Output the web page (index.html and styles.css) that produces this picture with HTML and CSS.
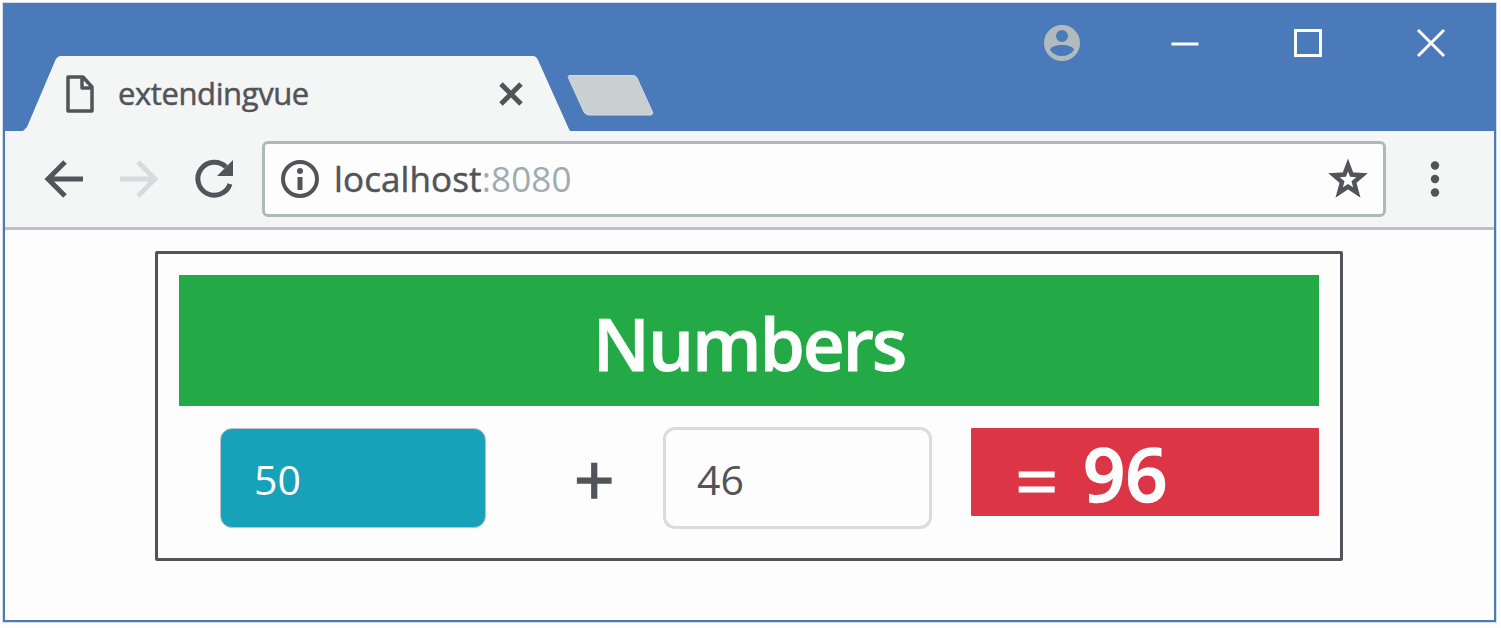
FILE: index.html
```html
<!DOCTYPE html>
<html lang="en">
<head>
<meta charset="utf-8">
<title>extendingvue</title>
<link rel="stylesheet" href="styles.css">
</head>
<body>
<div class="window">
  <header class="titlebar">
    <div class="tab">
      <svg class="tab-shape" width="547" height="75" viewBox="0 0 547 75"><path d="M0 75 L4 71 L32 5 Q34 0 38 0 H510 Q513 0 515 4 L545 71 L547 75 Z"/></svg>
      <svg class="page-icon" width="28" height="38" viewBox="0 0 28 38"><path d="M2 2H17L26 12V36H2Z M16 2V13H26"/></svg>
      <span class="tab-title">extendingvue</span>
      <svg class="tab-close" width="24" height="24" viewBox="0 0 24 24"><path d="M2 2L22 22M22 2L2 22"/></svg>
    </div>
    <svg class="new-tab" width="85" height="41" viewBox="0 0 85 41"><path d="M2 .5H65Q68 .5 69 3L84 36Q86 40 82 40H21Q18 40 16 37L1 4Q-1 .5 2 .5Z"/></svg>
    <div class="controls">
      <svg width="36" height="36" viewBox="0 0 36 36"><path class="user" fill-rule="evenodd" d="M18 0A18 18 0 1 0 18 36A18 18 0 1 0 18 0ZM18 5A6 6 0 1 1 18 17A6 6 0 1 1 18 5ZM18 20C24 20 30 22 30 25C27 29 23 31 18 31S9 29 6 25C6 22 12 20 18 20Z"/></svg>
      <svg width="28" height="28" viewBox="0 0 28 28"><path d="M.5 15H27.5"/></svg>
      <svg width="28" height="28" viewBox="0 0 28 28"><path d="M1.5 1.5H26.5V26.5H1.5Z"/></svg>
      <svg width="28" height="28" viewBox="0 0 28 28"><path d="M1 1L27 27M27 1L1 27"/></svg>
    </div>
  </header>
  <nav class="toolbar">
    <svg class="nav-icon" width="38" height="38" viewBox="0 0 38 38"><path d="M38 19H3M20 2L3 19L20 36"/></svg>
    <svg class="nav-icon disabled" width="38" height="38" viewBox="0 0 38 38"><path d="M0 19H35M18 2L35 19L18 36"/></svg>
    <svg class="nav-icon" width="40" height="38" viewBox="0 0 40 38"><path d="M31 7A16.5 16.5 0 1 0 35 24"/><path class="solid" d="M38 0V16H22Z"/></svg>
    <div class="address">
      <svg class="info" width="38" height="38" viewBox="0 0 38 38"><circle cx="19" cy="19" r="17"/><path d="M19 17V30"/><circle class="dot" cx="19" cy="11" r="3"/></svg>
      <span class="url"><span class="host">localhost</span><span class="port">:8080</span></span>
      <svg class="star" width="38" height="38" viewBox="0 0 38 38"><path d="M19 5L22.6 14.6L33 15.2L25 22L27.8 32.5L19 26.7L10.2 32.5L13 22L5 15.2L15.4 14.6Z"/></svg>
    </div>
    <svg class="menu" width="10" height="38" viewBox="0 0 10 38"><circle cx="5" cy="5.5" r="4.2"/><circle cx="5" cy="19" r="4.2"/><circle cx="5" cy="32.5" r="4.2"/></svg>
  </nav>
  <main class="content">
    <section class="panel">
      <h1 class="heading">Numbers</h1>
      <div class="row">
        <div class="field filled">50</div>
        <div class="plus">+</div>
        <div class="field outlined">46</div>
        <div class="result"><span class="equals">=</span><span class="sum">96</span></div>
      </div>
    </section>
  </main>
</div>
</body>
</html>
```
FILE: styles.css
```css
* { box-sizing: border-box; }
body { margin: 0; padding: 3px; height: 628px; overflow: hidden; background: #fdfdfd; font-family: "Open Sans", "Noto Sans", sans-serif; color: #515459; }
svg { display: block; flex: none; fill: none; overflow: visible; }
.window { width: 1493px; height: 619px; border: 2px solid #4b7abb; border-top: 0; box-shadow: 0 0 0 1px #d5dde0; background: #fdfdfd; }
.titlebar { display: flex; height: 128px; background: #4b7abb; }
.tab { position: relative; display: flex; flex: none; align-items: center; width: 547px; height: 75px; margin: 53px 0 0 18px; padding-left: 43px; }
.tab-shape { position: absolute; left: 0; top: 0; fill: #f4f6f6; }
.page-icon { position: relative; stroke: #515459; stroke-width: 3.5; stroke-linejoin: round; }
.tab-title { position: relative; width: 191px; margin: -2px 0 0 24px; font-size: 31px; letter-spacing: -0.4px; line-height: 40px; white-space: nowrap; -webkit-text-stroke: .5px #515459; }
.tab-close { position: relative; margin-left: 190px; stroke: #515459; stroke-width: 5; }
.new-tab { margin: 72px 0 0 -2px; fill: #c8d0d2; stroke: #d5dde0; }
.controls { display: flex; align-items: flex-start; margin: 22px 0 0 391px; stroke: #fdfdfd; stroke-width: 3; }
.controls svg { margin-right: 95px; }
.controls svg + svg { margin-top: 4px; }
.controls svg:first-child { margin-right: 91px; }
.controls svg:last-child { margin-right: 0; }
.controls .user { fill: #b1bbbd; stroke: none; }
.toolbar { display: flex; align-items: center; height: 99px; padding: 0 0 1px 40px; background: #f4f6f6; border-bottom: 3px solid #b9c3c6; }
.nav-icon { margin-right: 37px; stroke: #515459; stroke-width: 5; }
.nav-icon.disabled { stroke: #d5dcdf; }
.nav-icon + .nav-icon + .nav-icon { margin-right: 27px; }
.nav-icon .solid { fill: #515459; stroke: none; }
.address { display: flex; align-items: center; width: 1124px; height: 76px; padding: 0 16px 0 16px; background: #fdfdfd; border: 3px solid #afb9bb; border-radius: 6px; }
.info { stroke: #515459; stroke-width: 4; }
.info path { stroke-width: 5; }
.info .dot { fill: #515459; stroke: none; }
.url { flex: 1; margin-left: 15px; font-size: 35px; letter-spacing: .12px; line-height: 48px; padding-top: 1px; white-space: nowrap; }
.host { -webkit-text-stroke: .5px #515459; }
.port { color: #a0abb0; }
.star { stroke: #515459; stroke-width: 4.5; }
.menu { margin-left: 44px; fill: #515459; }
.content { padding: 21px 0 0 150px; }
.panel { width: 1188px; height: 310px; padding: 21px; border: 3px solid #515459; border-radius: 2px; }
.heading { margin: 0; height: 131px; padding-top: 4px; background: #23a945; color: #fdfdfd; font-size: 73px; font-weight: 600; letter-spacing: -2.2px; line-height: 128px; text-align: center; -webkit-text-stroke: .8px #fdfdfd; }
.row { display: flex; align-items: flex-start; padding: 21px 0 0 41px; }
.field { height: 102px; border: 3px solid #d5dde0; border-radius: 12px; padding-left: 31px; font-size: 41px; line-height: 99px; }
.filled { width: 266px; height: 100px; margin-top: 1px; border-width: 1px; border-color: #b9c3c6; background: #18a2b9; color: #fdfdfd; padding-left: 33px; line-height: 101px; }
.plus { width: 177px; padding: 3px 0 0 88px; font-size: 71px; font-weight: 400; line-height: 98px; -webkit-text-stroke: 1.4px #515459; }
.outlined { width: 269px; }
.result { display: flex; width: 348px; height: 88px; margin: 1px 0 0 39px; padding-left: 44px; background: #dc3545; color: #fdfdfd; font-size: 74px; font-weight: 600; line-height: 92px; border-radius: 1px; -webkit-text-stroke: 1.4px #fdfdfd; }
.equals { width: 68px; padding-top: 6px; font-size: 76px; font-weight: 400; -webkit-text-stroke: 1px #fdfdfd; }
```
